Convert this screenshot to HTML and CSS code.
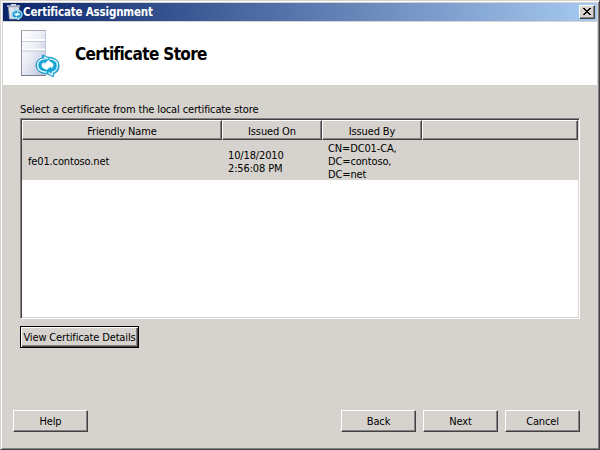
FILE: index.html
```
<!DOCTYPE html>
<html lang="en">
<head>
<meta charset="utf-8">
<title>Certificate Assignment</title>
<link rel="stylesheet" href="styles.css">
</head>
<body>
<svg width="0" height="0" class="defs" aria-hidden="true">
  <defs>
    <linearGradient id="panel" x1="0" y1="0" x2="1" y2="1">
      <stop offset="0" stop-color="#fff"/><stop offset=".45" stop-color="#eceef6"/><stop offset="1" stop-color="#b9c0dc"/>
    </linearGradient>
  </defs>
</svg>
<div class="window">
  <div class="titlebar">
    <svg class="app-icon" width="16" height="16" viewBox="0 0 16 16">
      <path d="M0 2h13M4 .8h5" stroke="#c9ccd2" stroke-width="1.6"/>
      <path d="M1.500 3h10.500v12H2.500z" fill="#dfe2ea" stroke="#a9adba" stroke-width=".7"/>
      <path d="M7.500 4.500L10 6Q15 6 15.500 10.500Q15 14 12.500 14.500L12 16L9.500 14.700Q5 14.500 4.700 10.500Q5 7 7.500 6.500z" fill="#e4f6fc" stroke="#62c3e4" stroke-width=".6"/>
      <path d="M9.500 8C5.500 8 5.500 12.500 9 12.700M11 8C15 8.500 14.500 12.700 10.500 12.700" fill="none" stroke="#1899cb" stroke-width="1.7"/>
      <path d="M8.500 6v4l2.500-2zM11.500 10.700v4l-2.500-2z" fill="#1899cb"/>
    </svg>
    <span class="caption">Certificate Assignment</span>
    <button class="close" aria-label="Close">
      <svg width="8" height="7" viewBox="0 0 8 7" shape-rendering="crispEdges"><path d="M0 0h2v1h1v1h2V1h1V0h2v1H7v1H6v1H5v1h1v1h1v1h1v1H6V6H5V5H3v1H2v1H0V6h1V5h1V4h1V3H2V2H1V1H0z"/></svg>
    </button>
  </div>
  <div class="banner">
    <svg class="server" width="42" height="50" viewBox="0 0 42 50">
      <path d="M2 2h23v44H2z" fill="url(#panel)"/>
      <path d="M1.500 1V47" stroke="#8c909c"/>
      <path d="M1 1.500h25" stroke="#a9acb5"/>
      <path d="M25.500 2v44" stroke="#c3c8d8"/>
      <path d="M1 46.500h25" stroke="#777c8a"/>
      <path d="M2 11h23M2 20.500h23" stroke="#fff" stroke-width="2"/>
      <path d="M2 12.500h23M2 22h23" stroke="#b8bccb" stroke-width=".7"/>
      <g transform="translate(15 25)">
        <path d="M7.500 .8L12.500 3Q23 3 24.200 11Q24.500 18 19 19.500L18.500 23L12 20Q2 19.500 .8 12Q.8 5.500 7 4z" fill="#17a5d6" stroke="#1c8db8" stroke-width=".6"/>
        <path d="M9 2.800L13 5M11 4.900C4.500 4.600 2.500 8 2.600 11.500C2.800 15.500 6 18 11.500 18.200M14 4.900C20.500 5.300 22.500 8.500 22.400 11.500C22.200 15.500 19.500 17.800 17.300 18.200L17 20.800L13.500 18.700" fill="none" stroke="#dff5fc" stroke-width="1.400"/>
        <path d="M11 8.200L13.500 6L15.500 8Q18.500 9 18.500 11.500Q18.300 13.600 16 14.500V12.500L11.500 16L8.500 14.300Q6.500 13.300 6.500 11.300Q6.800 9 9.500 8.300V10.300z" fill="#fff"/>
      </g>
    </svg>
    <h1>Certificate Store</h1>
  </div>
  <div class="content">
    <div class="prompt">Select a certificate from the local certificate store</div>
    <div class="list">
      <div class="head">
        <div class="th">Friendly Name</div><div class="th">Issued On</div><div class="th">Issued By</div><div class="th"></div>
      </div>
      <div class="row">
        <div class="td">fe01.contoso.net</div>
        <div class="td">10/18/2010<br>2:56:08 PM</div>
        <div class="td">CN=DC01-CA,<br>DC=contoso,<br>DC=net</div>
      </div>
    </div>
    <button class="btn details">View Certificate Details</button>
  </div>
  <div class="footer">
    <button class="btn help">Help</button>
    <button class="btn">Back</button>
    <button class="btn">Next</button>
    <button class="btn">Cancel</button>
  </div>
</div>
</body>
</html>
```
FILE: styles.css
```
* { box-sizing: border-box; }
body { margin: 0; width: 600px; height: 450px; overflow: hidden; background: #d6d3ce; font: 11px/13px "DejaVu Sans Condensed", "DejaVu Sans", sans-serif; font-stretch: condensed; letter-spacing: -.14px; color: #000; }
.defs { position: absolute; }
.window { width: 600px; height: 450px; padding: 1px; display: flex; flex-direction: column; background: #d6d3ce; border: 1px solid; border-color: #d6d3ce #424142 #424142 #d6d3ce; box-shadow: inset 1px 1px #fff, inset -1px -1px #848284; }
.titlebar { height: 18px; margin: 1px 1px 0; padding: 0 2px 0 4px; display: flex; align-items: center; background: linear-gradient(90deg, #0a246a, #a6caf0); }
.app-icon { flex: none; }
.caption { color: #fff; font-weight: bold; font-size: 11.5px; letter-spacing: -.18px; flex: 1; white-space: nowrap; }
.close { width: 16px; height: 14px; padding: 0 1px 1px 0; display: flex; align-items: center; justify-content: center; background: #d6d3ce; border: 1px solid; border-color: #fff #424142 #424142 #fff; box-shadow: inset -1px -1px #848284; }
.banner { height: 63px; margin: 1px 1px 0; padding-left: 17px; display: flex; align-items: center; background: #fff; }
h1 { margin: 1px 0 0 13px; font-size: 17px; letter-spacing: -.64px; line-height: 22px; font-weight: bold; white-space: nowrap; }
.content { padding: 18px 18px 0; flex: 1; }
.prompt { height: 15px; white-space: nowrap; }
.list { height: 201px; background: #fff; border: 1px solid; border-color: #848284 #fff #fff #848284; box-shadow: inset 1px 1px #424142, inset -1px -1px #d6d3ce; padding: 1px; }
.head, .row { display: grid; grid-template-columns: 200px 100px 100px 1fr; }
.th { height: 20px; display: flex; align-items: center; justify-content: center; padding: 2px 0 0; background: #d6d3ce; border: 1px solid; border-color: #fff #424142 #424142 #fff; box-shadow: inset -1px -1px #848284; }
.row { height: 40px; padding-top: 2px; background: #d6d3ce; align-items: center; }
.td { padding-left: 6px; white-space: nowrap; }
.btn { width: 75px; height: 22px; padding: 1px 0 0; font: inherit; letter-spacing: inherit; color: #000; background: #d6d3ce; border: 1px solid; border-color: #fff #424142 #424142 #fff; box-shadow: inset -1px -1px #848284; white-space: nowrap; }
.details { display: flex; align-items: center; justify-content: center; width: 119px; margin-top: 7px; padding: 1px 0 0; border-color: #000; box-shadow: inset 1px 1px #fff, inset -1px -1px #424142, inset -2px -2px #848284; }
.footer { height: 38px; display: flex; gap: 7px; padding: 0 18px 0 11px; }
.help { margin-right: auto; }
```
